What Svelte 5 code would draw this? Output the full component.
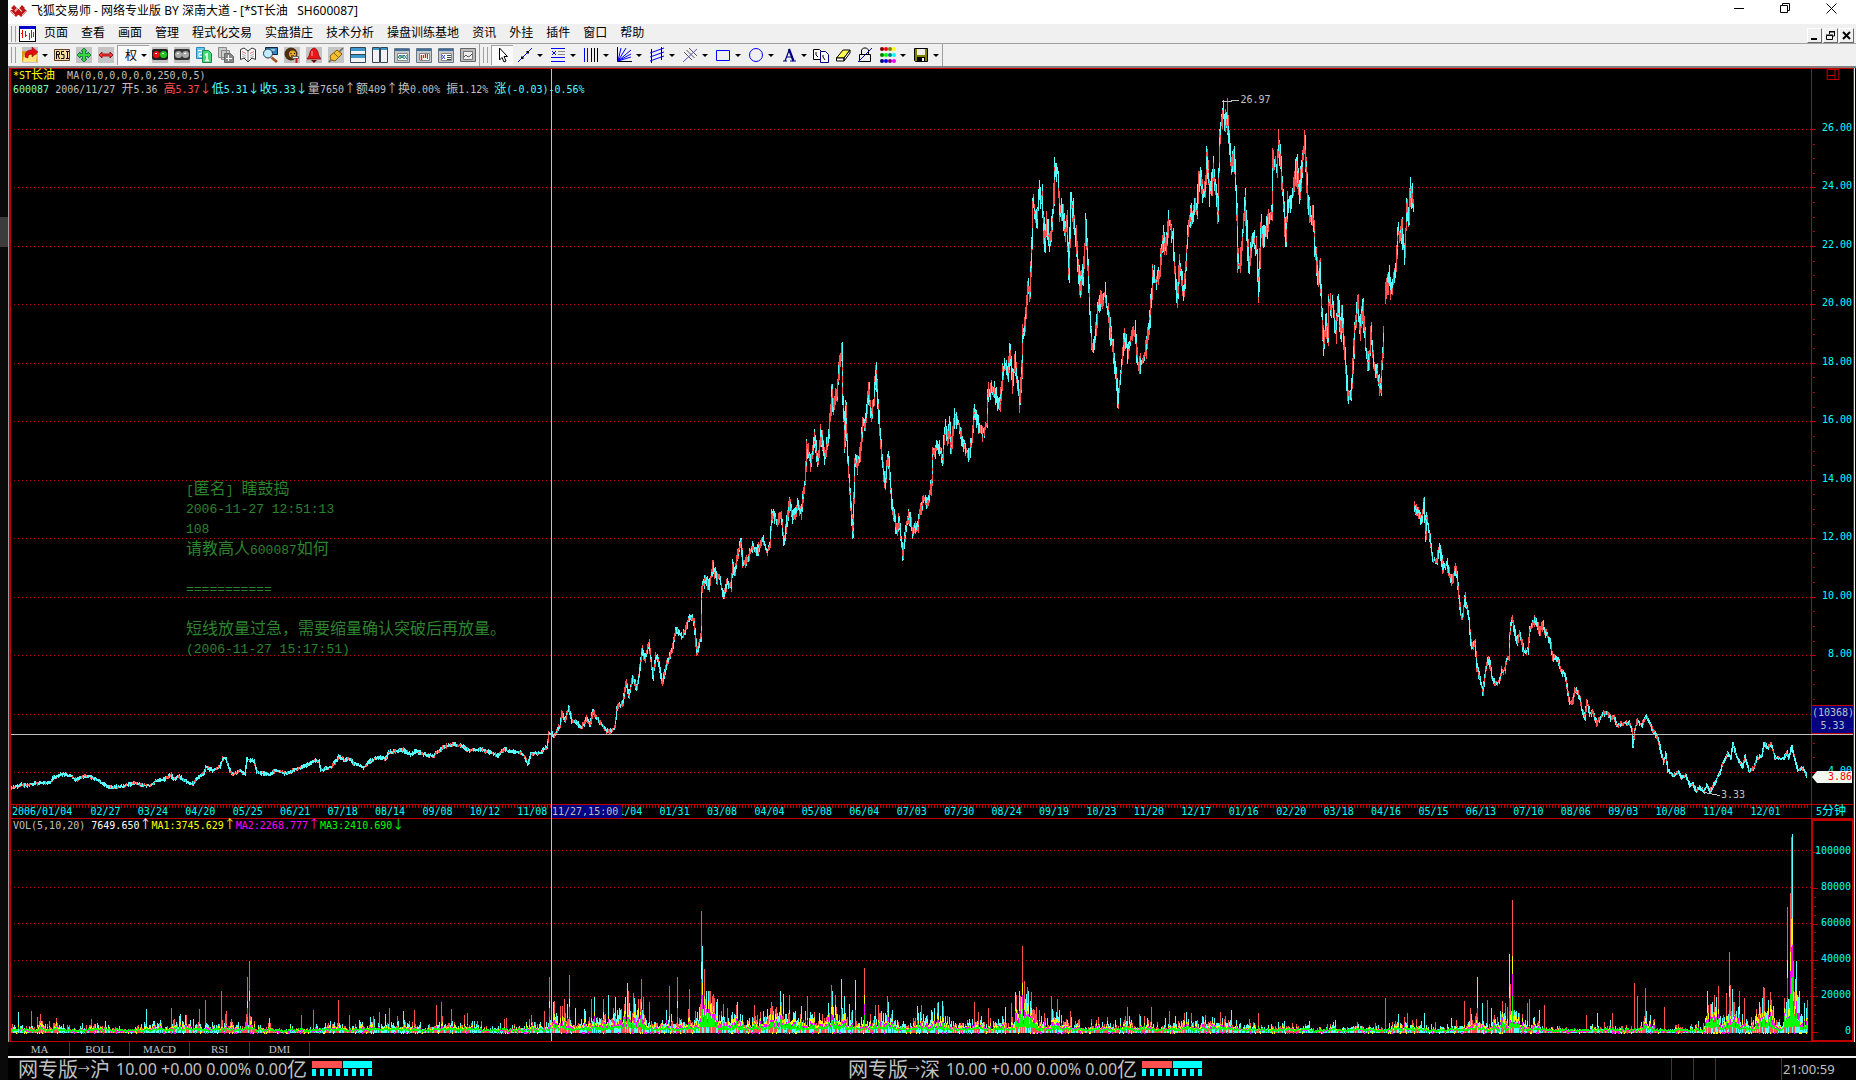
<script lang="ts">
	type Tool = { icon: string; label: string; menu?: boolean; active?: boolean };

	const menus = ['页面', '查看', '画面', '管理', '程式化交易', '实盘猎庄', '技术分析', '操盘训练基地', '资讯', '外挂', '插件', '窗口', '帮助'];

	const mainTools: Tool[] = [
		{ icon: 'open', label: '打开', menu: true },
		{ icon: 'rsi', label: 'RSI' },
		{ icon: 'move', label: '移动' },
		{ icon: 'stretch', label: '缩放' },
		{ icon: 'rights', label: '权', menu: true },
		{ icon: 'lights', label: '信号' },
		{ icon: 'lightsOff', label: '关闭信号' },
		{ icon: 'pageOne', label: '首页' },
		{ icon: 'pageAdd', label: '新增页' },
		{ icon: 'book', label: '资料' },
		{ icon: 'search', label: '查找' },
		{ icon: 'person', label: '选股' },
		{ icon: 'bell', label: '预警' },
		{ icon: 'plug', label: '连接' },
		{ icon: 'rows', label: '横向平铺' },
		{ icon: 'columns', label: '纵向平铺' },
		{ icon: 'winWave', label: '走势' },
		{ icon: 'winCandle', label: 'K线' },
		{ icon: 'winList', label: '列表' },
		{ icon: 'winGrey', label: '图表' }
	];

	const drawTools: Tool[] = [
		{ icon: 'cursor', label: '选择', active: true },
		{ icon: 'line', label: '直线', menu: true },
		{ icon: 'levels', label: '水平线', menu: true },
		{ icon: 'cycle', label: '周期线', menu: true },
		{ icon: 'fan', label: '扇形线', menu: true },
		{ icon: 'channel', label: '通道', menu: true },
		{ icon: 'parallel', label: '平行线', menu: true },
		{ icon: 'rect', label: '矩形', menu: true },
		{ icon: 'ellipse', label: '圆形', menu: true },
		{ icon: 'text', label: '文字', menu: true },
		{ icon: 'copy', label: '复制' },
		{ icon: 'eraser', label: '橡皮' },
		{ icon: 'lock', label: '锁定' },
		{ icon: 'colors', label: '颜色', menu: true },
		{ icon: 'save', label: '保存', menu: true }
	];

	const tile = '<path fill="#c4c4c4" d="M0 0h16v16H0z"/>';
	const win = '<path fill="#c8c8c8" stroke="#66788c" d="M.5 1.5h15v14H.5z"/><path fill="#3c6e9c" d="M1 2h14v2H1z"/><path fill="#fff" stroke="#888" d="M3.5 6.5h10v7h-10z"/>';

	const icons: Record<string, string> = {
		open: '<path fill="#c4c4c4" d="M0 0h16v16H0z"/><path fill="#d89a18" d="M0 4h6l1 2h8v9H1L0 14z"/><path fill="#ffe47a" d="M2 8h13l-1 7H1z"/><path fill="#e01010" stroke="#800" stroke-width=".5" d="M3 10c0-6 3-7 7-7V0l6 5-6 5V7C7 7 6 8 6 11z"/>',
		rsi: '<path fill="#ffd9a0" stroke="#604020" d="M.5 2.500h15v11H.5z"/><path fill="none" stroke="#000" d="M2.500 12V4.500H5l.5 1v2H3M4 8l1.500 4M10 4.500H7.500v3H10v4H7M13.500 4v8M12 4.500h3M12 11.500h3"/>',
		move: tile + '<path fill="#38d838" stroke="#064" stroke-width=".8" d="M8 1l3 3H9.500v2.500H12V5l3 3-3 3V9.500H9.500V12H11l-3 3-3-3h1.500V9.500H4V11L1 8l3-3v1.500h2.500V4H5z"/>',
		stretch: tile + '<path fill="#ff3838" stroke="#800" stroke-width=".8" d="M1 8l3-3v2h8V5l3 3-3 3V9H4v2z"/>',
		lights: '<path fill="#c4c4c4" d="M0 0h16v16H0z"/><rect y="2" width="16" height="11" rx="2" fill="#222"/><circle cx="4.500" cy="7.500" r="3.500" fill="#e81010"/><circle cx="11.500" cy="7.500" r="3.500" fill="#20c820"/><path stroke="#fff" d="M3 6.500h2M10 6.500h2"/>',
		lightsOff: '<path fill="#c4c4c4" d="M0 0h16v16H0z"/><rect y="2" width="16" height="11" rx="2" fill="#333"/><circle cx="4.500" cy="7.500" r="3.500" fill="#aaa"/><circle cx="11.500" cy="7.500" r="3.500" fill="#aaa"/><path stroke="#fff" d="M3 6.500h2M10 6.500h2"/>',
		pageOne: '<path fill="#6cc4e8" stroke="#2888b0" d="M.5.5h8v11h-8z"/><path stroke="#fff" d="M2 3.500h4v3H3v3h4"/><path fill="#48d878" stroke="#188848" d="M6.500 3.500h6l3 3v9h-9z"/><path stroke="#fff" stroke-width="1.500" fill="none" d="M9 8l2-1v6M9 13.500h4"/>',
		pageAdd: '<path fill="#ccc" stroke="#888" d="M.5.5h8v10h-8zM3.500 3.500h8v9h-8z"/><path fill="#888" stroke="#666" d="M6.500 6.500h6l3 3v6h-9z"/><path stroke="#fff" d="M10.500 8v6M8 11.500h6"/>',
		book: '<path fill="#fff" stroke="#333" d="M.5 2.500L4 1l4 3 4-3 3.500 1.500v10L12 11l-4 4-4-4-3.500 1.500z"/><path stroke="#777" d="M8 4v10"/><path stroke="#d66" fill="none" d="M2 4.500l4 2M10 6.500l4-2"/><path stroke="#aaa" fill="none" d="M2 7l4 2M2 9l4 2M10 9l4-2M10 11l4-2"/>',
		search: '<path fill="#2888c0" stroke="#124" d="M3.500.5h12v7h-12z"/><path stroke="#fff" d="M6 3h7"/><circle cx="6" cy="6.500" r="4.500" fill="#c0ecff" stroke="#234"/><path stroke="#a05018" stroke-width="2.600" d="M9.500 10.500L15 15"/>',
		person: tile + '<circle cx="7" cy="7" r="6.500" fill="#4a3010"/><circle cx="8.500" cy="7" r="3.500" fill="#e8a828"/><path stroke="#000" d="M6.500 6.500h1M10 6.500h1M7 9h3"/><path fill="#eee" stroke="#666" d="M8.500 9.500h6v2h-6z"/><path stroke="#c02020" stroke-width="2" d="M12.500 11v5"/>',
		bell: tile + '<path fill="#e81818" stroke="#800" stroke-width=".7" d="M8 1c4 1 4 5 5 8l2 3H1l2-3c1-3 1-7 5-8z"/><path fill="#700" d="M5 13h6l-3 3z"/><path stroke="#ffb0b0" d="M6 4v5"/>',
		plug: tile + '<path stroke="#666" stroke-width="1.500" d="M1 15l4-4M11 5l4-4"/><path fill="#f0c030" stroke="#86600a" d="M2 9l7-6 5 4-7 7-4-1z"/><path stroke="#86600a" d="M6 6l5 5"/>',
		rows: '<path fill="#f2f2f2" stroke="#345" d="M.5.5h15v15H.5z"/><path fill="#3c98cc" d="M1 1h14v3H1zM1 8h14v3H1z"/><path stroke="#345" d="M1 7.500h14"/>',
		columns: '<path fill="#f2f2f2" stroke="#345" d="M.5.5h7v15h-7zM8.500.5h7v15h-7z"/><path fill="#3c98cc" d="M1 1h6v2H1zM9 1h6v2H9z"/>',
		winWave: win + '<path fill="none" stroke="#2050c8" d="M4 11l2-3 2 3 2-3 3 4"/><path fill="none" stroke="#30a850" d="M4 9l2 3 2-4 2 4 3-4"/>',
		winCandle: win + '<path stroke="#e02020" stroke-width="1.500" d="M5.500 8v5M9.500 7v4"/><path stroke="#208030" d="M7.500 8v3M11.500 7v5"/>',
		winList: win + '<path fill="none" stroke="#2050c8" d="M4 8l3 4M4 12l3-4"/><path stroke="#444" d="M9 8.500h4M9 10.500h4M9 12.500h4"/>',
		winGrey: '<path fill="#bbb" stroke="#666" d="M.5 1.500h15v13H.5z"/><path fill="#eee" stroke="#777" d="M3.500 4.500h9v8h-9z"/><path fill="none" stroke="#555" d="M4 10l2-2 2 2 2-1 2-2"/>',
		cursor: '<path fill="#fff" stroke="#000" d="M5.500 1v12l2.500-2.500 2 4.500 2-1-2-4.500h3.500z"/>',
		line: '<path stroke="#00f" d="M1 15L15 1"/><path fill="#000" d="M4 9.500h2.500V12H4zM9.500 4H12v2.500H9.500z"/>',
		levels: '<path stroke="#00f" d="M1 1.500h14M1 10.500h14M1 14.500h14"/><path stroke="#888" d="M8 4.500h7M8 7.500h7"/><path stroke="#00f" d="M2 4l4 4M2 8l4-4"/>',
		cycle: '<path stroke="#00f" d="M1.500 1v14M4.500 1v14"/><path stroke="#000" d="M8.500 1v14M11.500 1v14M14.500 1v14"/>',
		fan: '<path stroke="#000" fill="none" d="M1.500 0v14.500H16"/><path stroke="#00f" d="M2 14L5 1M2 14L10 1M2 14L15 3M2 14l13-7M2 14l13-4"/>',
		channel: '<path stroke="#000" d="M2.500 2v14M12.500 0v13"/><path stroke="#00f" d="M1 6l14-5M1 10l14-5M1 14l14-5"/>',
		parallel: '<path stroke="#555" d="M2 5l8 8M4.500 3l8 8M7 1l8 8"/><path stroke="#55c" d="M1 15L15 2"/>',
		rect: '<path fill="none" stroke="#00f" d="M1.500 3.500h13v10h-13z"/>',
		ellipse: '<circle cx="8" cy="8" r="6.500" fill="none" stroke="#00f"/>',
		text: '<path fill="none" stroke="#000080" stroke-width="1.200" d="M2 14h4M9 14h6M4 14L8.500 2M5.500 10h6"/><path stroke="#000080" stroke-width="2.200" d="M8 2l4.500 12"/>',
		copy: '<path fill="#fff" stroke="#000" d="M.5 2.500h6l2 2v8h-8z"/><path fill="#fff" stroke="#000080" d="M7.500 4.500h5l3 3v8h-8z"/><path stroke="#000" fill="none" d="M3 5v3l2 2M10 8v2l2 3"/>',
		eraser: '<path fill="#ffff50" stroke="#000" d="M1.500 11L8 3h7l-6 8z"/><path fill="#fff" stroke="#000" d="M1.500 11H9v3H1.500zM9 11l6-8v3l-6 8z"/>',
		lock: '<path fill="none" stroke="#000" d="M4.500 7V3l2-2h3l2 2v4"/><path fill="none" stroke="#000" d="M2.500 7.500h11v7h-11z"/><path stroke="#00c" d="M1 15L15 1"/>',
		colors: '<circle cx="2" cy="2" r="2" fill="#800000"/><circle cx="6" cy="2" r="2" fill="red"/><circle cx="10" cy="2" r="2" fill="olive"/><circle cx="14" cy="2" r="2" fill="#ff0"/><circle cx="2" cy="8" r="2" fill="green"/><circle cx="6" cy="8" r="2" fill="lime"/><circle cx="10" cy="8" r="2" fill="teal"/><circle cx="14" cy="8" r="2" fill="#0ff"/><circle cx="2" cy="14" r="2" fill="navy"/><circle cx="6" cy="14" r="2" fill="#00f"/><circle cx="10" cy="14" r="2" fill="purple"/><circle cx="14" cy="14" r="2" fill="#f0f"/>',
		save: '<path fill="#808000" stroke="#000" d="M1.500 1.500h13v13h-12l-1-1z"/><path fill="#eee" d="M4 2h8v6H4z"/><path fill="#000" d="M4 10h8v5H4z"/><path fill="#fff" d="M9 11h2v3H9z"/>'
	};

	// Plot extents in chart units; one unit is one column of bars.
	const X0 = 11;
	const X1 = 1811;
	const PRICE_TOP = 69;
	const PRICE_H = 735;
	const VOL_TOP = 819;
	const VOL_H = 222;

	const priceY = (p: number) => 129 + (26 - p) * 29.23;
	const volY = (v: number) => 1033 - (v / 20000) * 36.6;

	const segments = [
		'11,788 21,784 27,785 36,783 43,782 50,782 54,777 62,774 71,775 76,780 82,776 89,776 98,780 109,787 123,786 135,782 143,785 151,785 156,780 164,779 171,774 174,779 179,776 185,780 192,784 198,777 204,773 206,766 212,770 220,766 223,758 226,758 230,770 233,774 240,770 245,773 247,759 254,760 257,772 270,774 275,770 286,773 298,768 306,765 316,760 319,761 321,770 332,766 339,756 345,760 349,758 354,763 364,767 371,760 379,757 386,758 389,752 402,749 411,754 416,751 429,755 434,755 443,747 451,744 461,745 470,750 482,749 498,755 504,749 512,751 520,752 524,755 528,764 531,754 541,752 547,746 549,733 552,733 554,736 560,725 562,712 565,720 569,707 572,720 577,722 581,728 587,718 590,725 593,710 597,718 608,732 615,727 617,708 623,702 626,682 629,695 633,676 637,689 640,667 642,648 645,660 649,643 653,677 656,655 659,663 662,683 667,663 672,650 676,628 683,637 689,617 694,620 697,652 701,637 702,587 706,578 709,587 713,565 717,580 719,575 724,597 727,582 731,585 733,563 735,573 738,553 741,543 743,563 747,560 752,547 758,550 763,538 767,552 770,545 772,513 774,517 777,522 781,513 784,543 787,520 790,500 793,518 798,503 801,513 805,483 807,445 811,463 815,437 818,463 821,432 825,457 829,432 832,393 833,410 837,393 840,360 842,350 843,397 845,443 846,407 848,460 851,507 853,533 855,460 857,467 861,450 863,420 865,423 869,390 871,417 874,400 876,370 878,400 881,443 885,487 887,463 889,457 892,503 897,533 899,517 903,557 906,527 909,513 913,533 918,525 920,510 924,498 928,502 932,483 933,453 938,445 943,457 945,428 948,442 950,423 951,450 955,417 959,423 963,443 969,455 972,440 974,413 978,423 982,433 987,423 988,392 993,388 997,398 1000,407 1003,373 1006,363 1008,375 1010,350 1013,383 1015,360 1020,403 1022,370 1023,333 1025,326 1028,287 1030,297 1032,247 1033,203 1035,210 1037,227 1039,193 1042,197 1045,247 1047,220 1050,243 1053,213 1055,170 1058,173 1060,210 1063,213 1065,233 1067,220 1069,273 1071,200 1073,210 1077,247 1079,277 1081,287 1084,267 1086,220 1088,263 1090,313 1092,347 1095,337 1098,307 1102,300 1105,293 1108,313 1112,343 1115,363 1118,400 1121,373 1125,333 1128,353 1132,333 1135,330 1138,363 1143,362 1147,343 1150,320 1153,273 1155,280 1157,280 1160,270 1163,237 1166,243 1169,220 1173,237 1175,270 1177,297 1180,263 1184,293 1188,230 1191,217 1194,213 1197,207 1199,177 1203,190 1205,193 1207,160 1210,193 1214,170 1218,213 1220,130 1223,110 1225,123 1227,112 1229,133 1232,170 1234,153 1237,207 1238,260 1240,267 1243,230 1245,197 1247,227 1249,267 1253,237 1257,253 1259,290 1261,223 1264,240 1268,220 1272,213 1273,157 1277,167 1279,143 1282,180 1286,237 1288,200 1291,203 1294,183 1297,167 1300,190 1303,153 1305,140 1307,183 1310,220 1313,213 1315,247 1318,280 1320,267 1322,313 1324,347 1326,317 1328,340 1329,303 1333,307 1336,333 1338,300 1341,333 1342,313 1345,353 1348,400 1351,393 1353,367 1355,327 1358,300 1360,333 1363,307 1366,350 1369,367 1371,333 1374,363 1377,373 1381,390 1382,367 1384,337',
		'1385,297 1387,290 1389,277 1391,293 1394,277 1397,257 1398,233 1402,230 1405,253 1407,207 1409,213 1411,187 1414,210',
		'1414,507 1419,513 1422,520 1424,502 1426,537 1427,517 1430,537 1433,560 1437,560 1440,548 1443,568 1447,563 1452,583 1455,568 1457,575 1459,597 1461,615 1463,615 1465,597 1469,617 1471,643 1473,647 1475,640 1477,667 1480,677 1483,692 1486,667 1489,657 1492,677 1495,682 1499,682 1502,670 1505,670 1507,658 1509,658 1510,633 1512,617 1517,642 1520,633 1524,652 1528,650 1530,628 1535,620 1540,630 1543,625 1546,633 1550,640 1553,657 1558,660 1562,672 1565,673 1568,693 1570,703 1573,700 1575,688 1580,697 1582,710 1585,718 1587,700 1590,713 1593,712 1597,723 1603,713 1608,713 1611,718 1614,716 1617,725 1622,723 1630,723 1632,730 1633,745 1635,730 1637,720 1642,725 1646,715 1649,722 1653,730 1658,738 1662,755 1664,762 1666,753 1668,770 1673,775 1678,772 1682,777 1686,775 1690,785 1693,783 1696,790 1699,787 1704,791 1707,785 1710,791 1715,782 1720,772 1723,763 1728,753 1731,758 1733,743 1737,757 1743,767 1745,755 1749,771 1754,767 1757,758 1762,755 1764,743 1768,748 1771,742 1775,757 1780,758 1784,758 1787,752 1789,757 1792,745 1795,760 1798,770 1803,768 1807,776'
	];

	// x, top, c(yan) or r(ed)
	const spikes =
		'18,1012,c 31,1011,r 37,1017,r 56,1018,r 146,1009,c 171,1008,r 199,1009,r 205,1000,r 221,991,r 247,977,r 249,961,r 301,1015,r 313,1010,r 338,1000,r 349,1015,r 373,1016,r 379,1012,r 389,1008,r 397,1016,r 414,1010,r 436,1005,r 441,1002,r 451,1009,r 464,1015,r 504,1019,r 529,1019,r 544,1011,r 549,977,r 554,1001,r 562,1006,r 569,975,r 575,1008,c 591,999,r 624,1004,r 627,983,c 641,979,r 649,1002,r 669,986,r 677,977,r 689,989,r 701,911,r 702,946,c 704,969,r 705,999,r 713,994,r 727,1008,r 754,1005,r 771,1002,r 789,995,r 807,996,r 831,985,r 841,979,c 844,996,c 849,1004,c 855,980,c 864,968,r 875,1005,r 881,1011,c 932,1012,c 974,1002,r 988,1008,r 1011,1003,r 1022,946,r 1024,981,r 1027,987,r 1031,992,r 1051,996,r 1070,1011,r 1125,1016,r 1151,1007,r 1169,1011,r 1191,1013,r 1220,1012,r 1258,1013,r 1385,998,r 1407,1013,r 1424,1013,c 1464,1001,r 1470,1008,r 1477,977,c 1482,1003,c 1487,1000,r 1491,1008,c 1509,954,c 1510,984,r 1512,900,r 1527,1003,r 1529,999,r 1544,1005,r 1586,1015,r 1597,1013,c 1612,1013,r 1634,983,r 1637,996,r 1645,988,r 1664,1007,r 1718,986,r 1726,993,r 1729,952,r 1730,985,r 1732,989,c 1744,998,r 1759,1002,c 1762,998,c 1763,987,r 1764,988,r 1771,1000,r 1784,998,r 1787,907,r 1790,893,r 1791,837,r 1792,834,c 1793,961,r 1795,979,c 1796,961,c 1797,995,c 1804,1003,c 1807,1000,r';

	// average volume bar height up to each x
	const volumeLevels = [
		[60, 8], [110, 6], [135, 4], [190, 7], [245, 10], [255, 18], [270, 6], [290, 4], [545, 7], [640, 15], [700, 16], [715, 26], [780, 15],
		[900, 17], [1015, 12], [1035, 24], [1080, 10], [1240, 8], [1385, 5], [1450, 7], [1500, 10], [1518, 20], [1540, 14],
		[1640, 6], [1655, 11], [1705, 5], [1740, 20], [1755, 8], [1775, 19], [1784, 9], [1800, 28], [1811, 15]
	];

	function seeded(seed: number) {
		return () => {
			seed = (seed * 1664525 + 1013904223) % 4294967296;
			return seed / 4294967296;
		};
	}

	function buildCandles() {
		const rand = seeded(600087);
		let cyan = '';
		let red = '';
		for (const segment of segments) {
			const points = segment.split(' ').map((p) => p.split(',').map(Number));
			for (let i = 0; i < points.length - 1; i++) {
				const [xa, ya] = points[i];
				const [xb, yb] = points[i + 1];
				for (let x = xa; x < xb; x++) {
					const from = ya + ((yb - ya) * (x - xa)) / (xb - xa);
					const to = ya + ((yb - ya) * (x + 1 - xa)) / (xb - xa);
					const spread = 2 + Math.max(0, (760 - from) / 660) * 14;
					let y = Math.round(Math.min(from, to) - rand() * spread);
					const end = Math.round(Math.max(from, to) + rand() * spread + 1);
					const bias = yb > ya ? 0.64 : 0.42;
					while (y < end) {
						const len = Math.min(end - y, 1 + Math.floor(rand() * 2 + rand() * spread * 0.8));
						const bar = `M${x} ${y}h1v${len}h-1z`;
						if (rand() < bias || (from > 740 && rand() < 0.5)) cyan += bar;
						else red += bar;
						y += len;
					}
				}
			}
		}
		return { cyan, red };
	}

	function buildVolume() {
		const rand = seeded(20061127);
		const base = 1033;
		const tops = new Map<number, { h: number; colour: string }>();
		for (const s of spikes.split(' ')) {
			const [x, y, colour] = s.split(',');
			tops.set(+x, { h: base - +y, colour });
		}
		const out: Record<string, string> = { c: '', r: '', yellow: '', magenta: '', lime: '' };
		const bar = (key: string, x: number, lo: number, hi: number) => {
			const a = Math.round(lo);
			const b = Math.max(a + 1, Math.round(hi));
			out[key] += `M${x} ${base - b}h1v${b - a}h-1z`;
		};
		let swell = 1;
		for (let x = X0; x < 1808; x++) {
			swell = Math.min(1.4, Math.max(0.6, swell + (rand() - 0.5) * 0.4));
			const level = (volumeLevels.find(([end]) => x < end)?.[1] ?? 5) * swell;
			const spike = tops.get(x);
			const h = spike ? spike.h : Math.min(level * (0.4 + rand() * 0.8 + rand() ** 5 * 1.3), 42);
			const colour = spike ? spike.colour : rand() < 0.55 ? 'c' : 'r';
			bar(colour, x, 0, h);
			if (h > 50) {
				bar('yellow', x, h * 0.42, h * 0.58);
				bar('magenta', x, h * 0.26, h * 0.44);
				bar('lime', x, 6, h * 0.28);
				continue;
			}
			const m = Math.max(level * 0.8, Math.min(h, level * 1.5));
			bar('yellow', x, m * 0.5, m * (0.55 + rand() * 0.25));
			bar('magenta', x, m * 0.36, m * (0.45 + rand() * 0.15));
			const g = Math.min(m * 0.16, 5) + rand() * 2;
			bar('lime', x, g, Math.max(g + 2, m * (0.3 + rand() * 0.2)));
			if (rand() < 0.2) bar(rand() < 0.5 ? 'yellow' : 'magenta', x, -1, 1);
		}
		return out;
	}

	const candles = buildCandles();
	const volume = buildVolume();

	const prices = [26, 24, 22, 20, 18, 16, 14, 12, 10, 8, 6, 4];
	const volumes = [100000, 80000, 60000, 40000, 20000, 0];
	const minorPrices = Array.from({ length: 43 }, (_, i) => 25.5 - i * 0.5).filter((p) => p % 2 !== 0 && p > 3.9);
	const minorVolumes = Array.from({ length: 15 }, (_, i) => 5000 + i * 5000).filter((v) => v % 20000 !== 0);

	const priceTop = (p: number) => ((priceY(p) - PRICE_TOP) / PRICE_H) * 100;
	const volTop = (v: number) => ((volY(v) - VOL_TOP) / VOL_H) * 100;
	const dateLeft = (i: number) => ((105.4 + i * 47.43 - X0) / (X1 - X0)) * 100;

	// the blank slot lies under the crosshair date
	const dates = '02/27,03/24,04/20,05/25,06/21,07/18,08/14,09/08,10/12,11/08,,01/04,01/31,03/08,04/04,05/08,06/04,07/03,07/30,08/24,09/19,10/23,11/20,12/17,01/16,02/20,03/18,04/16,05/15,06/13,07/10,08/06,09/03,10/08,11/04,12/01'.split(',');

	const heading = [
		['*ST长油', 'yellow'],
		['  MA(0,0,0,0,0,0,250,0,5)', 'grey']
	];
	const quote = [
		['600087', 'mint'],
		[' 2006/11/27 开5.36 ', 'grey'],
		['高5.37↓', 'red'],
		['低5.31↓收5.33↓', 'cyan'],
		['量7650↑额409↑换0.00% 振1.12% ', 'grey'],
		['涨(-0.03)-0.56%', 'cyan']
	];
	const volumeLegend = [
		['VOL(5,10,20) ', 'grey'],
		['7649.650↑', 'white'],
		['MA1:3745.629↑', 'yellow'],
		['MA2:2268.777↑', 'magenta'],
		['MA3:2410.690↓', 'lime']
	];

	const memo = ['[匿名] 瞎鼓捣', '2006-11-27 12:51:13', '108', '请教高人600087如何', '', '===========', '', '短线放量过急，需要缩量确认突破后再放量。', '(2006-11-27 15:17:51)'];
	const tabs = ['MA', 'BOLL', 'MACD', 'RSI', 'DMI'];

	// Full-width characters are set larger than the half-width ones.
	const runs = (text: string) => text.split(/([^\x00-\x7f]+)/).filter(Boolean);
	const isWide = (run: string) => run.charCodeAt(0) > 127;
</script>

{#snippet mixed(text: string)}{#each runs(text) as run}{#if isWide(run)}<span class="wide">{run}</span>{:else}{run}{/if}{/each}{/snippet}

{#snippet legend(items: string[][])}
	<p class="legend">{#each items as [text, colour]}<span class={colour}>{@render mixed(text)}</span>{/each}</p>
{/snippet}

{#snippet tool(t: Tool)}
	<button class="tool" class:active={t.active} class:rights={t.icon === 'rights'} class:has-menu={t.menu} aria-label={t.label}>
		{#if t.icon === 'rights'}
			<span>权</span>
		{:else}
			<svg width="16" height="16" viewBox="0 0 16 16" fill="none" aria-hidden="true">{@html icons[t.icon]}</svg>
		{/if}
		{#if t.menu}<i class="caret"></i>{/if}
	</button>
{/snippet}

{#snippet market(name: string)}
	<div class="market">
		<span>网专版</span><span class="arrow">→</span><span>{name}</span>
		<span class="figures">10.00 +0.00 0.00% 0.00</span><span>亿</span>
		<svg width="60" height="16" viewBox="0 0 60 16" shape-rendering="crispEdges" aria-hidden="true">
			<path fill="#ff5050" d="M0 0h30v7H0z" />
			<path fill="#0ff" d="M31 0h29v7H31z" />
			{#each [0, 8, 16, 24, 32, 40, 48, 56] as x}<path fill="#0ff" d={`M${x} 8h4v7h-4z`} />{/each}
		</svg>
	</div>
{/snippet}

<div class="desktop">
	<div class="window">
		<header class="titlebar">
			<svg class="logo" width="17" height="12" viewBox="0 0 17 12" aria-hidden="true">
				<path fill="#c01818" d="M4 0l3 3-3 3-3-3zM12 0l3 3-3 3-3-3zM3 3l3 3-3 3-3-3zM8 3l3 3-3 3-3-3zM14 3l3 3-3 3-3-3zM6 6l3 3-3 3-3-3zM11 6l3 3-3 3-3-3z" />
				<path stroke="#fff" stroke-width=".6" d="M5 7l6-6M6 1l6 6M1 6l4 4M16 6l-4 4" />
			</svg>
			<h1>飞狐交易师 - 网络专业版 BY 深南大道 - [*ST长油&nbsp;&nbsp; SH600087]</h1>
			<div class="caption">
				<button aria-label="最小化"><svg width="11" height="11" viewBox="0 0 11 11"><path stroke="#000" d="M0 5.500h10" /></svg></button>
				<button aria-label="还原"><svg width="11" height="11" viewBox="0 0 11 11"><path fill="none" stroke="#000" d="M.5 2.500h7v7h-7zM2.500 2.500v-2h7v7h-2" /></svg></button>
				<button aria-label="关闭"><svg width="11" height="11" viewBox="0 0 11 11"><path stroke="#000" d="M.5.5l10 10M10.500.5l-10 10" /></svg></button>
			</div>
		</header>

		<nav class="menubar">
			<i class="grip"></i>
			<svg class="doc" width="17" height="16" viewBox="0 0 17 16" shape-rendering="crispEdges" aria-hidden="true">
				<path fill="#fff" stroke="#000" d="M.5.5h16v15H.5z" /><path fill="#00c" d="M0 0h17v3H0z" />
				<path stroke="#e00" d="M3.500 4v8M2 7.500h2M6.500 5v6M6 9.500h2M12.500 4v8" /><path stroke="#080" d="M10.500 7v7M14.500 6v5" />
			</svg>
			{#each menus as item}<button>{item}</button>{/each}
			<div class="child-controls">
				<button aria-label="最小化子窗口"><svg width="10" height="9" viewBox="0 0 10 9"><path fill="#000" d="M1 7h6v2H1z" /></svg></button>
				<button aria-label="还原子窗口"><svg width="10" height="9" viewBox="0 0 10 9"><path fill="none" stroke="#000" d="M3.500 3V1h5v4H7M.5 4.500h6v4h-6zM3 .5h6M0 4h7" /></svg></button>
				<button aria-label="关闭子窗口"><svg width="10" height="9" viewBox="0 0 10 9"><path stroke="#000" stroke-width="2" d="M1 1l7 7M8 1L1 8" /></svg></button>
			</div>
		</nav>

		<div class="toolbar">
			<div class="group">
				<i class="grip"></i>
				{#each mainTools as t}{@render tool(t)}{/each}
			</div>
			<div class="group">
				<i class="grip"></i>
				{#each drawTools as t}{@render tool(t)}{/each}
			</div>
		</div>

		<main class="chart">
			<section class="plot price">
				<svg class="canvas" viewBox={`${X0} ${PRICE_TOP} ${X1 - X0} ${PRICE_H}`} preserveAspectRatio="none" shape-rendering="crispEdges" aria-hidden="true">
					{#each prices as p}
						<path class="grid" d={`M14 ${Math.round(priceY(p)) + 0.5}H1811`} />
					{/each}
					<path fill="#54ffff" d={candles.cyan} />
					<path fill="#ff5050" d={candles.red} />
					<path stroke="#c0c0c0" fill="none" d="M1222 101.500h10M1231 100.500h8M1704 792.500l16 3" />
				</svg>
				<div class="legends">
					{@render legend(heading)}
					{@render legend(quote)}
				</div>
				<div class="memo">
					{#each memo as line}<p>{@render mixed(line)}</p>{/each}
				</div>
				<span class="mark high">26.97</span>
				<span class="mark low">3.33</span>
			</section>

			<aside class="axis price">
				<svg class="canvas" viewBox={`1811 ${PRICE_TOP} 42 ${PRICE_H}`} preserveAspectRatio="none" shape-rendering="crispEdges" aria-hidden="true">
					{#each prices as p}<path stroke="#c00000" d={`M1811 ${Math.round(priceY(p)) + 0.5}h4`} />{/each}
					{#each minorPrices as p}<path stroke="#c00000" d={`M1812 ${Math.round(priceY(p)) + 0.5}h2`} />{/each}
					<path fill="none" stroke="#c00000" d="M1826.500 69.500h12v10h-12zM1834.500 69.500v10M1826.500 75.500h8" />
				</svg>
				{#each prices as p}
					{#if p !== 6}<span class="tick" style:top={`${priceTop(p)}%`}>{p.toFixed(2)}</span>{/if}
				{/each}
				<div class="cursor-tag"><span>(10368)</span><span>5.33</span></div>
				<div class="last-tag">3.86</div>
			</aside>

			<div class="dates">
				<svg class="canvas" viewBox="0 0 1800 14" preserveAspectRatio="none" shape-rendering="crispEdges" aria-hidden="true">
					<path stroke="#c00000" stroke-width="3" stroke-dasharray="1 2" d="M2 1.500H1797" />
				</svg>
				<span class="first">2006/01/04</span>
				{#each dates as date, i}
					{#if date}<span class="date" style:left={`${dateLeft(i)}%`}>{date}</span>{/if}
				{/each}
				<span class="now">11/27,15:00</span>
			</div>
			<div class="period">{@render mixed('5分钟')}</div>

			<section class="plot volume">
				<svg class="canvas" viewBox={`${X0} ${VOL_TOP} ${X1 - X0} ${VOL_H}`} preserveAspectRatio="none" shape-rendering="crispEdges" aria-hidden="true">
					{#each volumes.slice(0, -1) as v}
						<path class="grid" d={`M14 ${Math.round(volY(v)) + 0.5}H1811`} />
					{/each}
					<path fill="#54ffff" d={volume.c} />
					<path fill="#ff5050" d={volume.r} />
					<path fill="#ffff00" d={volume.yellow} />
					<path fill="#ff00ff" d={volume.magenta} />
					<path fill="#00ff00" d={volume.lime} />
				</svg>
				<div class="legends">{@render legend(volumeLegend)}</div>
			</section>
			<aside class="axis volume">
				<svg class="canvas" viewBox={`1811 ${VOL_TOP} 42 ${VOL_H}`} preserveAspectRatio="none" shape-rendering="crispEdges" aria-hidden="true">
					{#each volumes as v}<path stroke="#c00000" d={`M1811 ${Math.round(volY(v)) + 0.5}h5`} />{/each}
					{#each minorVolumes as v}<path stroke="#c00000" d={`M1812 ${Math.round(volY(v)) + 0.5}h2`} />{/each}
				</svg>
				{#each volumes as v}<span class="tick" style:top={`${volTop(v)}%`}>{v}</span>{/each}
			</aside>

			<div class="cross-x"></div>
			<div class="cross-y"></div>
		</main>

		<div class="tabs">
			{#each tabs as tab}<button>{tab}</button>{/each}
		</div>

		<footer class="status">
			{@render market('沪')}
			{@render market('深')}
			<i class="cell"></i><i class="cell"></i><i class="cell last"></i>
			<time>21:00:59</time>
		</footer>
	</div>
</div>

<style>
	:global(body) {
		margin: 0;
		background: #000;
	}

	button {
		margin: 0;
		padding: 0;
		border: 0;
		background: none;
		color: inherit;
		font: inherit;
	}

	p,
	h1 {
		margin: 0;
		font-weight: 400;
	}

	.desktop {
		display: flex;
		box-sizing: border-box;
		height: 100vh;
		padding-left: 8px;
		background: linear-gradient(#0a0a0a 217px, #3c3c3c 217px, #3c3c3c 247px, #0a0a0a 247px);
		font-family: 'DejaVu Sans Mono', 'Noto Sans CJK SC', monospace;
		font-size: 10px;
		line-height: 14px;
	}

	.window {
		display: flex;
		flex: 1;
		flex-direction: column;
		min-width: 0;
		background: #000;
	}

	.titlebar {
		display: flex;
		align-items: center;
		height: 24px;
		padding: 0 2px;
		background: #fff;
		color: #000;
		font-family: 'Noto Sans', 'Noto Sans CJK SC', sans-serif;
	}

	.logo {
		margin-bottom: 3px;
	}

	.titlebar h1 {
		margin-left: 4px;
		padding-bottom: 2px;
		font-size: 12px;
		line-height: 22px;
		white-space: nowrap;
	}

	.caption {
		display: flex;
		align-self: stretch;
		margin-left: auto;
	}

	.caption button {
		width: 46px;
		padding-bottom: 4px;
	}

	.menubar {
		display: flex;
		align-items: center;
		height: 19px;
		padding-left: 3px;
		border-bottom: 1px solid #a0a0a0;
		background: #f0f0f0;
		color: #000;
		font-family: 'Noto Sans CJK SC', sans-serif;
		font-size: 12px;
		line-height: 16px;
	}

	.menubar > button {
		padding: 0 6px 3px 7px;
		white-space: nowrap;
	}

	.doc {
		margin-right: 1px;
	}

	.grip {
		flex: none;
		width: 1px;
		height: 16px;
		margin-right: 3px;
		border-right: 1px solid #a0a0a0;
		border-left: 1px solid #a0a0a0;
		padding-right: 2px;
	}

	.child-controls {
		display: flex;
		gap: 1px;
		align-self: flex-end;
		margin-left: auto;
		padding-right: 2px;
	}

	.child-controls button {
		display: flex;
		align-items: center;
		justify-content: center;
		box-sizing: border-box;
		width: 15px;
		height: 15px;
		border: 1px solid;
		border-color: #fff #696969 #696969 #fff;
	}

	.toolbar {
		display: flex;
		height: 22px;
		border-bottom: 2px solid #808080;
		background: #f0f0f0;
		color: #000;
	}

	.group {
		display: flex;
		align-items: center;
		padding-left: 3px;
		border-right: 1px solid #a0a0a0;
	}

	.group .grip {
		margin-right: 2px;
	}

	.group + .group .grip {
		margin-right: 3px;
	}

	.tool {
		display: flex;
		align-items: center;
		justify-content: center;
		box-sizing: border-box;
		width: 22px;
		height: 20px;
	}

	.tool svg {
		flex: none;
	}

	.tool.has-menu {
		width: 33px;
		gap: 4px;
	}

	.tool.active {
		background: #fafafa;
		box-shadow: inset 1px 1px #a0a0a0;
	}

	.tool.rights {
		width: 32px;
		padding-left: 6px;
		background: #fafafa;
		box-shadow: inset 1px 1px #a0a0a0;
		font-family: 'Noto Sans CJK SC', sans-serif;
		font-size: 12px;
	}

	.caret {
		border: 3px solid transparent;
		border-top-color: #000;
		border-bottom: 0;
	}

	.chart {
		position: relative;
		display: grid;
		flex: 1;
		grid-template-rows: minmax(0, 735fr) 15px minmax(0, 222fr);
		grid-template-columns: minmax(0, 1fr) 42px;
		min-height: 0;
		margin-right: 2px;
		margin-left: 1px;
		border: 1px solid #c00000;
		border-left-width: 2px;
		box-shadow: -1px 0 #a0a0a0, 1px 0 #f0f0f0;
	}

	.plot,
	.axis {
		position: relative;
		min-height: 0;
	}

	.canvas {
		position: absolute;
		width: 100%;
		height: 100%;
		inset: 0;
	}

	.grid {
		stroke: #c00000;
		stroke-dasharray: 1 3;
	}

	.axis {
		box-sizing: border-box;
		border-left: 1px solid #c00000;
		color: #00ffff;
	}

	.axis.volume {
		border: 2px solid #c00000;
		border-width: 2px 1px 1px 2px;
	}

	.tick {
		position: absolute;
		right: 1px;
		margin-top: -8px;
	}

	.legends {
		position: relative;
		padding-left: 2px;
	}

	.legend {
		height: 14px;
		line-height: 12px;
		white-space: pre;
	}

	.wide {
		font-family: 'Noto Sans CJK SC', sans-serif;
		font-size: 12px;
		line-height: 10px;
	}

	.memo {
		position: absolute;
		top: 56%;
		left: 175px;
		color: #2c842c;
		font-family: 'Liberation Mono', 'Noto Sans CJK SC', monospace;
		font-size: 13px;
		line-height: 17px;
	}

	.memo p {
		height: 20px;
		white-space: pre;
	}

	.memo .wide {
		font-size: 16px;
		line-height: 12px;
	}

	.mark {
		position: absolute;
		color: #c0c0c0;
	}

	.mark.high {
		top: 24px;
		left: 68.3%;
	}

	.mark.low {
		bottom: 2px;
		left: 95%;
	}

	.cursor-tag {
		position: absolute;
		top: 86.5%;
		right: 0;
		left: 0;
		display: flex;
		flex-direction: column;
		height: 27px;
		border: 1px solid #c00000;
		border-width: 1px 0;
		background: #000080;
		color: #c0c0c0;
		line-height: 13px;
		text-align: center;
	}

	.last-tag {
		position: absolute;
		top: 95.5%;
		right: 1px;
		left: 0;
		height: 12px;
		background: #f0f8f0;
		clip-path: polygon(0 50%, 5px 0, 100% 0, 100% 100%, 5px 100%);
		color: #ff0000;
		line-height: 12px;
		text-align: right;
	}

	.dates,
	.period {
		position: relative;
		box-sizing: border-box;
		border-top: 1px solid #c00000;
		border-bottom: 1px solid #c00000;
		color: #00ffff;
		line-height: 13px;
	}

	.date,
	.now {
		position: absolute;
		top: 0;
		margin-left: -15px;
	}

	.first {
		position: relative;
		padding-left: 1px;
	}

	.now {
		left: 30%;
		width: 70px;
		margin-left: 1px;
		background: #000080;
		color: #c0c0c0;
	}

	.period {
		border-left: 1px solid #c00000;
		padding-left: 4px;
		line-height: 12px;
		white-space: nowrap;
	}

	.cross-x {
		position: absolute;
		top: 0;
		bottom: 0;
		left: 29.3%;
		width: 1px;
		background: #c0c0c0;
	}

	.cross-y {
		position: absolute;
		top: 68.4%;
		right: 0;
		left: 0;
		height: 1px;
		background: #c0c0c0;
	}

	.tabs {
		display: flex;
		height: 14px;
		margin-right: 2px;
		margin-left: 2px;
		color: #c0c0c0;
	}

	.tabs button {
		box-sizing: border-box;
		width: 60px;
		border-right: 1px solid #c00000;
		font-family: 'Liberation Serif', serif;
		font-size: 11px;
	}

	.status {
		display: flex;
		align-items: stretch;
		height: 22px;
		border-top: 2px solid #f0f0f0;
		color: #c0c0c0;
	}

	.market {
		display: flex;
		flex: 0 0 830px;
		align-items: center;
		box-sizing: border-box;
		min-width: 0;
		padding-left: 10px;
		font-family: 'Noto Sans CJK SC', sans-serif;
		font-size: 20px;
		line-height: 20px;
		white-space: nowrap;
	}

	.market .arrow {
		font-size: 12px;
	}

	.market .figures {
		margin-left: 6px;
		font-family: 'Noto Sans', sans-serif;
		font-size: 16px;
	}

	.market svg {
		margin-left: 5px;
	}

	.cell {
		width: 21px;
		border-left: 1px solid #c00000;
	}

	.market + .cell {
		margin-left: auto;
	}

	.cell.last {
		width: 65px;
	}

	time {
		width: 73px;
		border-left: 1px solid #c00000;
		padding-left: 1px;
		font-family: 'Noto Sans', sans-serif;
		font-size: 13px;
		line-height: 22px;
	}

	.yellow { color: #ffff00; }
	.grey { color: #c0c0c0; }
	.mint { color: #80ffb0; }
	.red { color: #ff5050; }
	.cyan { color: #54ffff; }
	.white { color: #ffffff; }
	.magenta { color: #ff00ff; }
	.lime { color: #00ff00; }
</style>
